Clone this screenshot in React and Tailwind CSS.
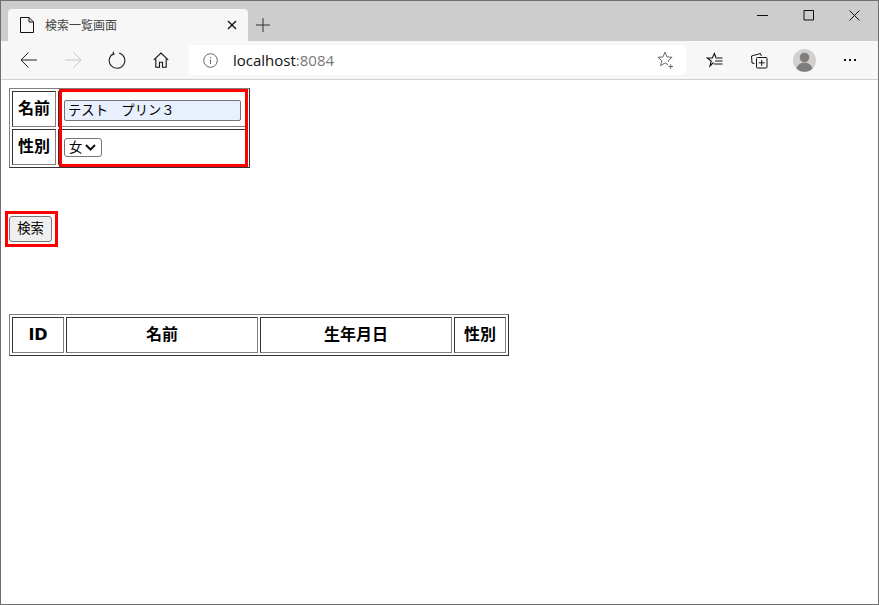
const jp = "font-['Noto_Sans_CJK_JP',sans-serif]";

const Doc = () => (
  <svg width="14" height="16" viewBox="0 0 14 16" fill="none" stroke="#111" strokeWidth="1">
    <path d="M.5.5h8.5l4.500 4.500v10.500h-13z" />
    <path d="M9 .5v4.500h4.500" />
  </svg>
);

const Line = ({ d, size = 16, stroke = "#222", width = 1, fill = "none" }) => (
  <svg width={size} height={size} viewBox={`0 0 ${size} ${size}`} fill={fill} stroke={stroke} strokeWidth={width}>
    <path d={d} />
  </svg>
);

const ToolButton = ({ children, className = "w-[44px]" }) => (
  <div className={`flex h-full shrink-0 items-center justify-center ${className}`}>{children}</div>
);

const Reload = () => (
  <svg width="18" height="18" viewBox="0 0 18 18" fill="none" stroke="#222" strokeWidth="1.1">
    <path d="M5.800 2.400a7.800 7.800 0 1 0 5.300-.4" />
    <path d="M5 .8l1 2.300-2.300 1" />
  </svg>
);

const Home = () => (
  <svg width="16" height="16" viewBox="0 0 16 16" fill="none" stroke="#111" strokeWidth="1.1">
    <path d="M.8 7.800l7.200-6.800 7.200 6.800" />
    <path d="M2.800 6.500v8.700h3.700v-5h3v5h3.700v-8.700" />
  </svg>
);

const Info = () => (
  <svg width="15" height="15" viewBox="0 0 15 15" fill="none" stroke="#666" strokeWidth="1">
    <circle cx="7.500" cy="7.500" r="6.800" />
    <path d="M7.500 6.500v4.500M7.500 4v1.200" />
  </svg>
);

const Star = () => (
  <svg width="17" height="17" viewBox="0 0 17 17" fill="none" stroke="#666" strokeWidth="1">
    <path d="M11 12.700l-3-1.800-4.400 2.700 1.200-5-3.900-3.300 5.100-.4 2-4.700 2 4.700 5.100.4-3.900 3.300.3 1.200" />
    <path d="M11.500 14.500h4.500M13.700 12.300v4.500" />
  </svg>
);

const Favorites = () => (
  <svg width="17" height="17" viewBox="0 0 17 17" fill="none" stroke="#111" strokeWidth="1.1">
    <path d="M7.500 10.500l-3.500 3.500 1.200-5-3.900-3h5.100l2-4.500 1.500 4" />
    <path d="M9.500 6h7M9 9h7.500M8 12h8.500" />
  </svg>
);

const Collections = () => (
  <svg width="17" height="17" viewBox="0 0 17 17" fill="none" stroke="#111" strokeWidth="1">
    <path d="M3.500 11.500l-2.500-.5-.5-7 9-2.500.8 2.500" />
    <rect x="5.500" y="5.500" width="10.500" height="10.500" rx="1" />
    <path d="M10.700 7.800v6M7.700 10.800h6" />
  </svg>
);

const Avatar = () => (
  <svg width="23" height="23" viewBox="0 0 23 23">
    <circle cx="11.500" cy="11.500" r="11.500" fill="#d2d0ce" />
    <circle cx="11.500" cy="8.500" r="4.800" fill="#807e7c" />
    <path d="M3.500 19.500c1-4 4-5.800 8-5.800s7 1.800 8 5.800a11.500 11.500 0 0 1-16 0z" fill="#807e7c" />
  </svg>
);

// same bevel as a plain <table border="1">: cells sunken, table raised
const Cell = ({ as: Tag = "th", className = "", children }) => (
  <Tag className={`h-[36px] border border-t-[#333] border-l-[#333] border-r-[#808080] border-b-[#808080] p-0 ${className}`}>
    {children}
  </Tag>
);

const tableBorder = "border-separate border-spacing-[2px] border border-t-[#808080] border-l-[#808080] border-r-[#333] border-b-[#333]";

export default function App() {
  return (
    <div className={`flex h-[605px] w-[879px] flex-col overflow-hidden border border-[#6f6f6f] bg-white text-black ${jp}`}>
      {/* TAB BAR */}
      <div className="flex h-[40px] shrink-0 items-end bg-[#cdcdcd] pl-[7px]">
        <div className="flex h-[32px] w-[240px] items-center rounded-t-[4px] bg-[#f7f7f7] pl-[12px] pr-[11px]">
          <Doc />
          <span className="ml-[11px] flex-1 text-[12px] text-[#444]">検索一覧画面</span>
          <Line size={10} width={1.4} stroke="#111" d="M1 1l8 8M9 1l-8 8" />
        </div>
        <div className="flex h-[32px] w-[30px] items-center justify-center">
          <Line size={14} stroke="#333" d="M7 0v14M0 7h14" />
        </div>
        <div className="ml-auto flex h-full items-start pr-[1px]">
          <div className="flex h-[29px] w-[46px] items-center justify-center">
            <Line size={11} stroke="#111" d="M0 5.500h11" />
          </div>
          <div className="flex h-[29px] w-[46px] items-center justify-center">
            <Line size={11} stroke="#111" d="M1 .5h9.500v9.500h-9.500z" />
          </div>
          <div className="flex h-[29px] w-[46px] items-center justify-center">
            <Line size={11} stroke="#111" d="M.5.5l10 10M10.500.5l-10 10" />
          </div>
        </div>
      </div>

      {/* TOOLBAR */}
      <div className="flex h-[39px] shrink-0 items-center border-b border-[#d0d0d0] bg-[#f7f7f7] pl-[6px]">
        <ToolButton>
          <Line size={18} stroke="#222" d="M1 9h16M8.500 1.500l-7.500 7.500 7.500 7.500" />
        </ToolButton>
        <ToolButton>
          <Line size={18} stroke="#c8c8c8" d="M1 9h16M9.500 1.500l7.500 7.500-7.500 7.500" />
        </ToolButton>
        <ToolButton>
          <Reload />
        </ToolButton>
        <ToolButton>
          <Home />
        </ToolButton>
        <div className="ml-[6px] flex h-[30px] w-[497px] shrink-0 items-center rounded-[4px] bg-white pl-[14px] pr-[12px]">
          <Info />
          <span className="ml-[15px] flex-1 font-['Open_Sans',sans-serif] text-[15px] text-[#111]">
            localhost<span className="text-[#777]">:8084</span>
          </span>
          <Star />
        </div>
        <ToolButton className="ml-[6px] w-[45px]">
          <Favorites />
        </ToolButton>
        <ToolButton className="w-[45px]">
          <Collections />
        </ToolButton>
        <ToolButton className="w-[45px]">
          <Avatar />
        </ToolButton>
        <ToolButton className="w-[45px]">
          <Line size={14} width={1.8} stroke="#111" d="M1 7h2M6 7h2M11 7h2" />
        </ToolButton>
      </div>

      {/* PAGE */}
      <div className="flex flex-1 flex-col items-start pl-[4px] pt-[8px]">
        {/* SEARCH FORM */}
        <div className="relative ml-[4px]">
          <table className={tableBorder}>
            <tbody>
              <tr>
                <Cell className="w-[44px] pb-[4px] text-[16px] font-bold">名前</Cell>
                <Cell as="td" className="w-[187px] pl-[5px] pr-[5px] pt-[3px]">
                  <input
                    readOnly
                    value="テスト　プリン３"
                    className="block h-[21px] w-[177px] rounded-[2px] border border-[#767676] bg-[#e8f0fe] px-[3px] pb-[3px] text-[13.330px] text-black"
                  />
                </Cell>
              </tr>
              <tr>
                <Cell className="pb-[4px] text-[16px] font-bold">性別</Cell>
                <Cell as="td" className="pl-[5px]">
                  <div className="flex h-[19px] w-[38px] items-center rounded-[3px] border border-[#767676] bg-white pl-[4px] text-[13.330px]">
                    女
                    <svg className="ml-[3px]" width="11" height="7" viewBox="0 0 11 7" fill="none" stroke="#111" strokeWidth="2">
                      <path d="M1 1l4.500 4.500 4.500-4.500" />
                    </svg>
                  </div>
                </Cell>
              </tr>
            </tbody>
          </table>
          {/* red highlight drawn over the two input cells */}
          <div className="absolute left-[50px] top-[1px] h-[78px] w-[189px] border-[3px] border-[#ff0000]" />
        </div>

        {/* SEARCH BUTTON */}
        <div className="mt-[43px] border-[3px] border-[#ff0000] pb-[2px] pl-[1px] pr-[3px] pt-[2px]">
          <button className="block h-[26px] w-[43px] rounded-[3px] border border-[#767676] bg-[#efefef] pb-[3px] text-[13.330px] leading-none">
            検索
          </button>
        </div>

        {/* RESULT TABLE */}
        <table className={`ml-[4px] mt-[67px] ${tableBorder}`}>
          <thead>
            <tr>
              <Cell className="w-[52px] font-['DejaVu_Sans',sans-serif] text-[16px] font-bold">ID</Cell>
              <Cell className="w-[192px] pb-[4px] text-[16px] font-bold">名前</Cell>
              <Cell className="w-[192px] pb-[4px] text-[16px] font-bold">生年月日</Cell>
              <Cell className="w-[52px] pb-[4px] text-[16px] font-bold">性別</Cell>
            </tr>
          </thead>
        </table>
      </div>
    </div>
  );
}
